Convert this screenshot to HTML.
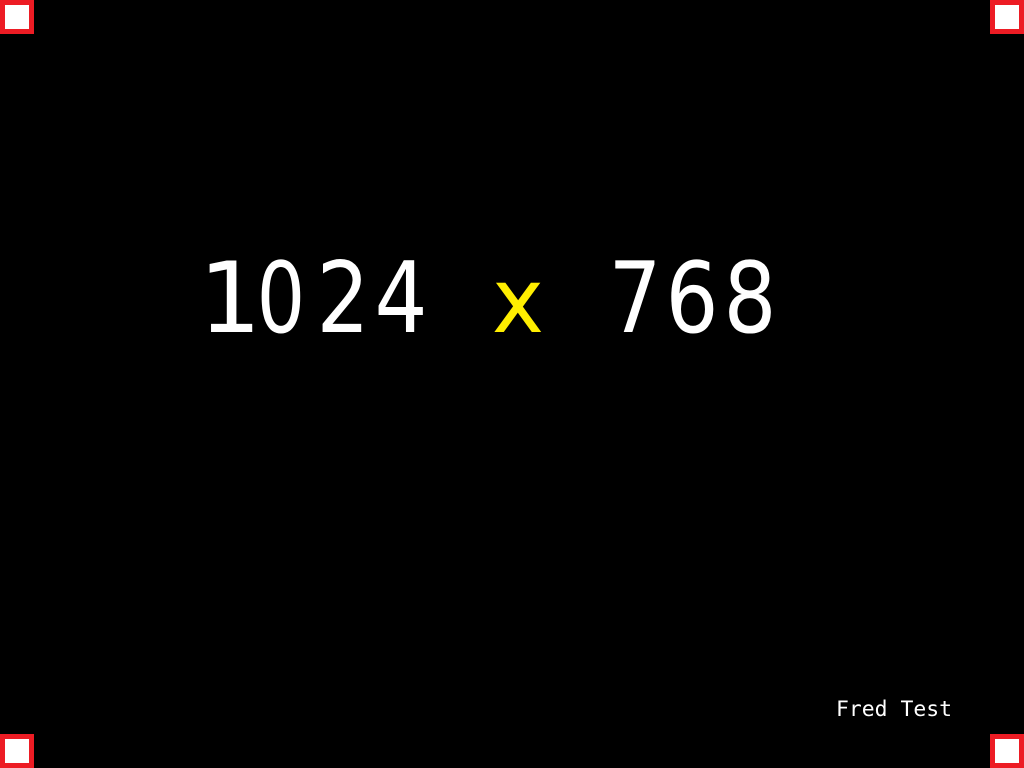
<!DOCTYPE html>
<html><head><meta charset="utf-8"><style>
html,body{margin:0;padding:0;background:#000;width:1024px;height:768px;overflow:hidden}
svg{display:block}
</style></head><body>
<svg width="1024" height="768" viewBox="0 0 1024 768" xmlns="http://www.w3.org/2000/svg">
<rect width="1024" height="768" fill="#000"/>
<g fill="#ed1c24">
<rect x="0" y="0" width="34" height="34"/>
<rect x="990" y="0" width="34" height="34"/>
<rect x="0" y="734" width="34" height="34"/>
<rect x="990" y="734" width="34" height="34"/>
</g>
<g fill="#fff">
<rect x="5" y="5" width="24" height="24"/>
<rect x="995" y="5" width="24" height="24"/>
<rect x="5" y="739" width="24" height="24"/>
<rect x="995" y="739" width="24" height="24"/>
</g>
<g font-family="'DejaVu Sans', 'Liberation Sans', sans-serif" font-size="98" text-anchor="middle" fill="#fff">
<text transform="translate(230,332) scale(1.0,1)">1</text>
<text transform="translate(281,332) scale(0.78,1)">0</text>
<text transform="translate(343,332) scale(0.85,1)">2</text>
<text transform="translate(401,332) scale(0.85,1)">4</text>
<text transform="translate(518,332) scale(0.9,0.92)" fill="#ffee00">x</text>
<text transform="translate(635,332) scale(0.85,1)">7</text>
<text transform="translate(692,332) scale(0.85,1)">6</text>
<text transform="translate(750,332) scale(0.85,1)">8</text>
</g>
<text x="836" y="716" font-family="'DejaVu Sans Mono', 'Liberation Mono', monospace" font-size="21" fill="#fff" textLength="116" lengthAdjust="spacingAndGlyphs">Fred Test</text>
</svg>
</body></html>
